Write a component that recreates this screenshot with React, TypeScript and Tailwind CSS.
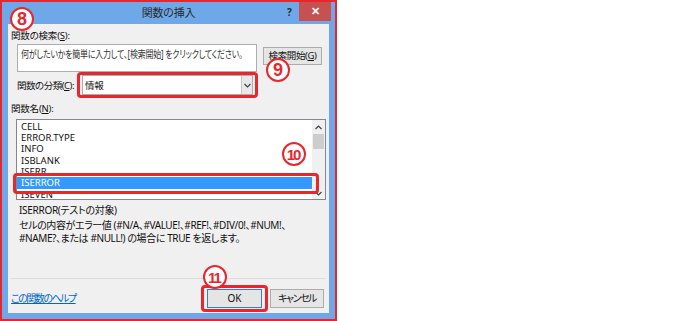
import React from "react";

const RED = "border-[#e8262d]";

function Marker({ n, className }: { n: string; className: string }) {
  return (
    <div
      className={`absolute w-[24px] h-[24px] rounded-full border-[2.5px] ${RED} bg-white text-[#e8262d] font-['Liberation_Sans',sans-serif] font-bold flex items-center justify-center leading-none ${className}`}
    >
      <span className={n.length > 1 ? "text-[15px] tracking-[-2px] -ml-[2px]" : "text-[18px]"}>{n}</span>
    </div>
  );
}

function Chevron({ up }: { up?: boolean }) {
  return (
    <svg width="7" height="5" viewBox="0 0 7 5" className={up ? "rotate-180" : ""}>
      <path d="M0.5 1 L3.5 4 L6.5 1" fill="none" stroke="#404040" strokeWidth="1.2" />
    </svg>
  );
}

const items = ["CELL", "ERROR.TYPE", "INFO", "ISBLANK", "ISERR"];

export default function App() {
  return (
    <div className="relative w-[690px] h-[321px] bg-white overflow-hidden font-['Noto_Sans','Noto_Sans_CJK_JP',sans-serif] [font-feature-settings:'palt'] text-[#111]">
      {/* dialog */}
      <div className="w-[337px] h-[321px] border-2 border-[#e8262d] bg-[#6fa8e8] flex flex-col">
        {/* title bar */}
        <div className="relative h-[22px] flex items-center justify-center">
          <span className="text-[11px] tracking-[-0.2px] text-[#2b2b2b]">関数の挿入</span>
          <span className="absolute left-[285px] top-[3px] text-[10px] font-bold text-[#2b2b2b]">?</span>
          <div className="absolute left-[297px] top-0 w-[32px] h-[19px] bg-[#c75050] flex items-center justify-center text-white text-[11px] font-bold">
            ✕
          </div>
        </div>

        {/* content panel */}
        <div className="mx-[6px] mb-[6px] flex-1 bg-[#f0f0f0] flex flex-col text-[9.5px] tracking-[-0.2px]">
          <div className="mt-[5px] ml-[3px] h-[13px] leading-[13px]">
            関数の検索(<span className="underline">S</span>):
          </div>

          <div className="mt-[2px] flex items-start">
            <div className="ml-[9px] w-[240px] h-[28px] bg-white border border-[#abadb3] px-[3px] pt-[3px] leading-[13px] text-[#333] whitespace-nowrap overflow-hidden">
              <span className="inline-block origin-left scale-x-[0.8] text-[10px] tracking-[-0.3px]">
                何がしたいかを簡単に入力して、[検索開始] をクリックしてください。
              </span>
            </div>
            <div className="ml-[6px] mt-[3px] w-[59px] h-[18px] bg-[#e5e5e5] border border-[#acacac] flex items-center justify-center tracking-[-0.4px] whitespace-nowrap">
              検索開始(<span className="underline">G</span>)
            </div>
          </div>

          <div className="mt-[3px] flex items-center h-[20px]">
            <span className="ml-[9px] w-[65px] leading-[13px] whitespace-nowrap tracking-[-0.5px]">
              関数の分類(<span className="underline">C</span>):
            </span>
            <div className="w-[171px] h-[20px] bg-white border border-[#acacac] flex items-center">
              <span className="flex-1 pl-[2px] leading-[13px]">情報</span>
              <div className="w-[11px] h-[18px] bg-[#e8e8e8] border-l border-[#c8c8c8] flex items-center justify-center">
                <Chevron />
              </div>
            </div>
          </div>

          <div className="mt-[7px] ml-[3px] h-[13px] leading-[13px]">
            関数名(<span className="underline">N</span>):
          </div>

          <div className="mt-[4px] ml-[8px] w-[310px] h-[81px] bg-white border border-[#828790] flex overflow-hidden">
            <div className="flex-1 pt-[1px] text-[9.5px] tracking-normal">
              {items.map((t) => (
                <div key={t} className="h-[11.2px] leading-[11.2px] pl-[4px]">
                  {t}
                </div>
              ))}
              <div className="h-[12px] leading-[12px] pl-[4px] bg-[#3399ff] text-white">ISERROR</div>
              <div className="h-[11px] leading-[11px] pl-[4px]">ISEVEN</div>
            </div>
            <div className="w-[13px] bg-[#f0f0f0] flex flex-col items-center">
              <div className="h-[14px] flex items-center justify-center">
                <Chevron up />
              </div>
              <div className="w-[11px] h-[15px] bg-[#cdcdcd]" />
              <div className="flex-1" />
              <div className="h-[12px] flex items-center justify-center">
                <Chevron />
              </div>
            </div>
          </div>

          <div className="mt-[4px] ml-[11px] h-[13px] leading-[13px] text-[10px] tracking-[-0.3px]">ISERROR(テストの対象)</div>
          <div className="mt-[2px] ml-[11px] leading-[13px] text-[10px] tracking-[-0.4px] whitespace-nowrap">
            <div>セルの内容がエラー値 (#N/A、#VALUE!、#REF!、#DIV/0!、#NUM!、</div>
            <div>#NAME?、または #NULL!) の場合に TRUE を返します。</div>
          </div>

          <div className="mt-[33px] ml-[2px] w-[316px] h-px bg-[#dcdcdc]" />

          <div className="mt-[10px] flex items-center h-[19px]">
            <span className="ml-[3px] text-[#0066cc] underline leading-[13px] text-[10px] tracking-[-1.5px]">この関数のヘルプ</span>
            <div className="ml-auto w-[55px] h-[19px] bg-[#e5e5e5] border border-[#3c7fb1] flex items-center justify-center tracking-normal text-[10px]">
              OK
            </div>
            <div className="ml-[8px] mr-[5px] w-[54px] h-[19px] bg-[#e5e5e5] border border-[#acacac] flex items-center justify-center text-[10px] tracking-[-1.5px]">
              キャンセル
            </div>
          </div>
        </div>
      </div>

      {/* annotations */}
      <div className={`absolute left-[77px] top-[72px] w-[181px] h-[26px] border-[3px] ${RED} rounded-[4px]`} />
      <div className={`absolute left-[13px] top-[173px] w-[306px] h-[21px] border-[3px] ${RED} rounded-[4px]`} />
      <div className={`absolute left-[201px] top-[285px] w-[67px] h-[27px] border-[3px] ${RED} rounded-[4px]`} />
      <Marker n="8" className="left-[10px] top-[7px]" />
      <Marker n="9" className="left-[266px] top-[58px]" />
      <Marker n="10" className="left-[282px] top-[142px]" />
      <Marker n="11" className="left-[203px] top-[265px]" />
    </div>
  );
}
